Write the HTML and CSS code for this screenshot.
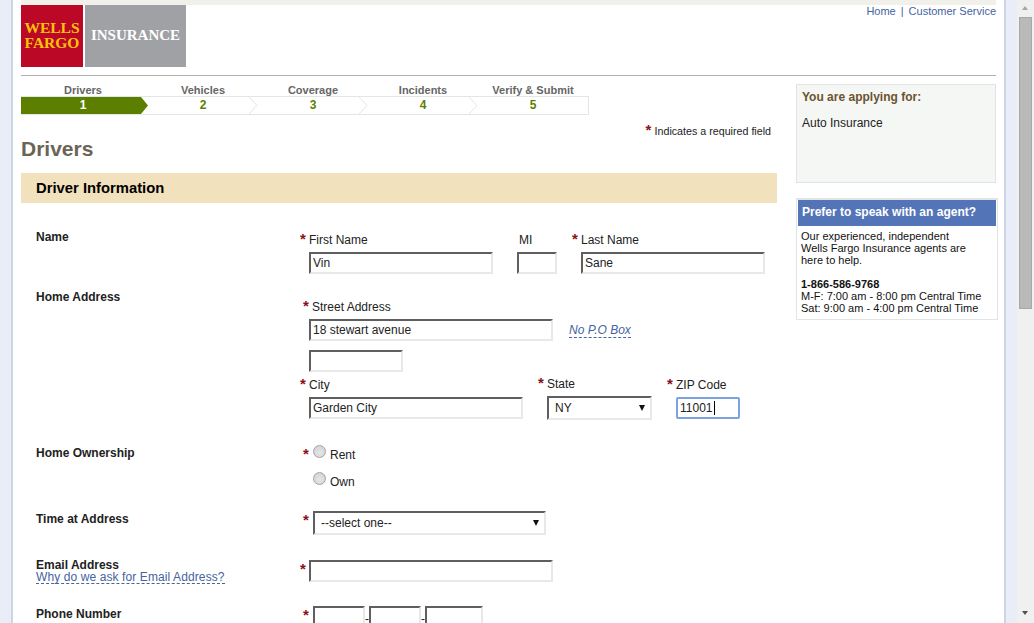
FILE: index.html
```html
<!DOCTYPE html>
<html lang="en">
<head>
  <meta charset="UTF-8">
  <title>Wells Fargo Insurance - Drivers</title>
  <link rel="stylesheet" href="styles.css">
</head>
<body>
  <div class="sheet">
    <div class="top-strip"></div>
    <header class="header">
      <div class="logo">
        <div class="logo-red">WELLS<br>FARGO</div>
        <div class="logo-grey">INSURANCE</div>
      </div>
      <nav class="top-nav"><a href="#">Home</a><span class="pipe">|</span><a href="#">Customer Service</a></nav>
    </header>

    <div class="columns">
      <main class="main">
        <div class="step-labels">
          <span>Drivers</span><span>Vehicles</span><span>Coverage</span><span>Incidents</span><span>Verify &amp; Submit</span>
        </div>
        <div class="step-bar">
          <div class="step step-active">1</div>
          <div class="step">2
            <svg class="chevron" width="10" height="17" viewBox="0 0 10 17"><polyline points="1,0 9,8.5 1,17" fill="none" stroke="#e1e6e6" stroke-width="1"/></svg>
          </div>
          <div class="step">3
            <svg class="chevron" width="10" height="17" viewBox="0 0 10 17"><polyline points="1,0 9,8.5 1,17" fill="none" stroke="#e1e6e6" stroke-width="1"/></svg>
          </div>
          <div class="step">4
            <svg class="chevron" width="10" height="17" viewBox="0 0 10 17"><polyline points="1,0 9,8.5 1,17" fill="none" stroke="#e1e6e6" stroke-width="1"/></svg>
          </div>
          <div class="step">5</div>
        </div>

        <p class="req-note"><span class="req">*</span>Indicates a required field</p>
        <h1 class="page-title">Drivers</h1>
        <h2 class="band">Driver Information</h2>

        <form class="form">
          <div class="row row-name">
            <div class="row-label">Name</div>
            <div class="fields">
              <div class="field field-first">
                <label class="cap"><span class="req">*</span>First Name</label>
                <input class="txt w184" type="text" value="Vin">
              </div>
              <div class="field field-mi">
                <label class="cap">MI</label>
                <input class="txt w40" type="text">
              </div>
              <div class="field field-last">
                <label class="cap"><span class="req">*</span>Last Name</label>
                <input class="txt w184" type="text" value="Sane">
              </div>
            </div>
          </div>

          <div class="row row-address">
            <div class="row-label">Home Address</div>
            <div class="fields-stack">
              <label class="cap cap-street"><span class="req">*</span>Street Address</label>
              <div class="street-line">
                <input class="txt w244" type="text" value="18 stewart avenue">
                <a class="hint hint-po" href="#">No P.O Box</a>
              </div>
              <input class="txt w94 street-two" type="text">
              <div class="city-line">
                <div class="field field-city">
                  <label class="cap"><span class="req">*</span>City</label>
                  <input class="txt w214" type="text" value="Garden City">
                </div>
                <div class="field field-state">
                  <label class="cap cap-state"><span class="req">*</span>State</label>
                  <div class="select-wrap w105">
                    <select class="sel sel-state"><option>NY</option></select>
                  </div>
                </div>
                <div class="field field-zip">
                  <label class="cap"><span class="req">*</span>ZIP Code</label>
                  <div class="zip-wrap">
                    <input class="txt txt-focus w64" type="text" value="11001">
                  </div>
                </div>
              </div>
            </div>
          </div>

          <div class="row row-own">
            <div class="row-label">Home Ownership</div>
            <div class="radios">
              <span class="req req-side">*</span>
              <div class="radio-list">
                <label class="radio-line"><input class="radio" type="radio" name="own">Rent</label>
                <label class="radio-line"><input class="radio" type="radio" name="own">Own</label>
              </div>
            </div>
          </div>

          <div class="row row-time">
            <div class="row-label">Time at Address</div>
            <div class="inline-field">
              <span class="req req-side">*</span>
              <div class="select-wrap w233">
                <select class="sel"><option>--select one--</option></select>
              </div>
            </div>
          </div>

          <div class="row row-email">
            <div class="row-label">Email Address
              <a class="hint hint-email" href="#">Why do we ask for Email Address?</a>
            </div>
            <div class="inline-field inline-email">
              <span class="req req-side">*</span>
              <input class="txt w244" type="text">
            </div>
          </div>

          <div class="row row-phone">
            <div class="row-label">Phone Number</div>
            <div class="inline-field">
              <span class="req req-side">*</span>
              <input class="txt w52" type="text"><span class="dash">-</span><input class="txt w52" type="text"><span class="dash">-</span><input class="txt w58" type="text">
            </div>
          </div>
        </form>
      </main>

      <aside class="side">
        <div class="applying">
          <div class="applying-title">You are applying for:</div>
          <div class="applying-item">Auto Insurance</div>
        </div>
        <div class="agent">
          <div class="agent-head">Prefer to speak with an agent?</div>
          <div class="agent-body">
            Our experienced, independent<br>
            Wells Fargo Insurance agents are<br>
            here to help.<br>
            <br>
            <strong>1-866-586-9768</strong><br>
            M-F: 7:00 am - 8:00 pm Central Time<br>
            Sat: 9:00 am - 4:00 pm Central Time
          </div>
        </div>
      </aside>
    </div>
  </div>

  <div class="scrollbar">
    <div class="arrow-up"></div>
    <div class="thumb"></div>
    <div class="arrow-down"></div>
  </div>
</body>
</html>
```

FILE: styles.css
```css
html, body {
  margin: 0;
  height: 623px;
  overflow: hidden;
}
body {
  display: flex;
  background: #e8edf7;
  font-family: "Liberation Sans", Arial, sans-serif;
  font-size: 12px;
  color: #222;
}
a {
  color: #44639f;
  text-decoration: none;
}

/* page sheet */
.sheet {
  box-sizing: border-box;
  width: 995px;
  height: 623px;
  margin-left: 11px;
  margin-right: 11px;
  padding: 0 8px;
  background: #fff;
  border-left: 2px solid #cdd5e4;
  border-right: 2px solid #cdd5e4;
  overflow: hidden;
}
.top-strip {
  height: 5px;
  background: #f1f0ea;
}
.header {
  display: flex;
  justify-content: space-between;
  height: 70px;
  border-bottom: 1px solid #b0b0b0;
}
.logo {
  display: flex;
  gap: 2px;
  height: 62px;
}
.logo-red {
  box-sizing: border-box;
  width: 62px;
  padding-top: 15px;
  background: #bb0826;
  color: #fcc20a;
  font-family: "Liberation Serif", serif;
  font-weight: bold;
  font-size: 15.5px;
  line-height: 15px;
  text-align: center;
}
.logo-grey {
  box-sizing: border-box;
  width: 101px;
  padding-top: 23px;
  background: #a0a1a4;
  color: #fff;
  font-family: "Liberation Serif", serif;
  font-weight: bold;
  font-size: 15px;
  line-height: 15px;
  text-align: center;
}
.top-nav {
  font-size: 11px;
  line-height: 13px;
}
.pipe {
  margin: 0 5px;
  color: #44639f;
}

.columns {
  display: flex;
  gap: 19px;
}
.main {
  width: 756px;
  flex: none;
}

/* steps */
.step-labels, .step-bar {
  display: grid;
  grid-template-columns: 127px 110px 110px 110px 110px;
  width: 568px;
  box-sizing: border-box;
}
.step-labels {
  height: 13px;
  margin-top: 7px;
  font-size: 11px;
  font-weight: bold;
  line-height: 14px;
  color: #666;
  text-align: center;
}
.step-labels span:first-child {
  padding-right: 3px;
}
.step-bar {
  height: 19px;
  border: 1px solid #e1e6e6;
  border-left: 0;
  font-size: 12px;
  font-weight: bold;
  line-height: 17px;
  color: #5c7f00;
  text-align: center;
}
.step {
  position: relative;
}
.step-active {
  background: #5c7f00;
  color: #fff;
  padding-right: 3px;
  clip-path: polygon(0 0, 120px 0, 127px 50%, 120px 100%, 0 100%);
}
.chevron {
  position: absolute;
  right: 0;
  top: 0;
}

.req {
  color: #8b1020;
  font-weight: bold;
  font-size: 15px;
  line-height: 10px;
  display: inline-block;
  width: 9px;
  text-align: left;
}
.req-note {
  margin: 9px 6px 0 0;
  font-size: 10.7px;
  line-height: 14px;
  color: #222;
  text-align: right;
}
.page-title {
  margin: -2px 0 0;
  font-size: 21px;
  line-height: 26px;
  color: #6b6455;
}
.band {
  margin: 11px 0 0;
  height: 30px;
  padding-left: 15px;
  background: #f2e1bd;
  color: #000;
  font-size: 14.8px;
  line-height: 30px;
}

/* form rows */
.form {
  padding-left: 15px;
}
.row {
  display: grid;
  grid-template-columns: 273px 1fr;
}
.row-label {
  font-weight: bold;
  line-height: 14px;
  color: #222;
}
.row-name { margin-top: 27px; }
.row-address { margin-top: 16px; }
.row-own { margin-top: 26px; }
.row-time { margin-top: 22px; }
.row-email { margin-top: 23px; }
.row-phone { margin-top: 23px; }
.row-email .row-label {
  padding-top: 1px;
  line-height: 12px;
}

.fields {
  display: flex;
  padding-top: 3px;
}
.field {
  display: flex;
  flex-direction: column;
  align-items: flex-start;
}
.cap {
  height: 14px;
  line-height: 14px;
  margin-bottom: 5px;
  white-space: nowrap;
  margin-left: -9px;
}
.field-mi { margin-left: 24px; }
.field-mi .cap { margin-left: 2px; }
.field-last { margin-left: 24px; }

.txt {
  box-sizing: border-box;
  height: 22px;
  margin: 0;
  padding: 1px 2px;
  border-style: solid;
  border-width: 2px;
  border-color: #5f5f5f #e8e8e8 #e8e8e8 #5f5f5f;
  background: #fff;
  font-family: "Liberation Sans", Arial, sans-serif;
  font-size: 12px;
  color: #222;
  outline: none;
}
.w40 { width: 40px; }
.w52 { width: 52px; }
.w58 { width: 58px; }
.w64 { width: 64px; }
.w94 { width: 94px; }
.w105 { width: 105px; }
.w184 { width: 184px; }
.w214 { width: 214px; }
.w233 { width: 233px; }
.w244 { width: 244px; }

.fields-stack {
  padding-top: 10px;
}
.cap-street {
  display: block;
  margin-left: -6px;
}
.street-line {
  display: flex;
  align-items: center;
}
.hint {
  border-bottom: 1px dashed #44639f;
  line-height: 13px;
}
.hint-po {
  margin: 2px 0 0 16px;
  font-style: italic;
}
.street-two {
  display: block;
  margin-top: 9px;
}
.city-line {
  display: flex;
  margin-top: 6px;
}
.field-state { margin-left: 24px; }
.cap-state {
  margin-top: -1px;
}
.field-zip { margin-left: 24px; }

.select-wrap {
  position: relative;
  height: 24px;
}
.sel {
  box-sizing: border-box;
  width: 100%;
  height: 24px;
  margin: 0;
  padding: 0 6px;
  border-style: solid;
  border-width: 2px;
  border-color: #5f5f5f #e8e8e8 #e8e8e8 #5f5f5f;
  border-radius: 0;
  background: #fff;
  font-family: "Liberation Sans", Arial, sans-serif;
  font-size: 12px;
  color: #222;
  appearance: none;
}
.select-wrap::after {
  content: "";
  position: absolute;
  right: 7px;
  top: 9px;
  border-style: solid;
  border-width: 6px 3.5px 0;
  border-color: #111 transparent transparent;
}
.zip-wrap {
  position: relative;
}
.zip-wrap::after {
  content: "";
  position: absolute;
  left: 38px;
  top: 4px;
  width: 1px;
  height: 14px;
  background: #000;
}
.txt-focus {
  border: 2px solid #7da2e0;
  border-radius: 2px;
}

.radios, .inline-field {
  display: flex;
  margin-top: -1px;
  margin-left: -6px;
}
.req-side {
  width: 10px;
  height: 14px;
  line-height: 18px;
}
.radio-list {
  display: flex;
  flex-direction: column;
  gap: 11px;
  padding-top: 2px;
}
.radio-line {
  display: flex;
  align-items: center;
  height: 16px;
  gap: 4px;
}
.radio {
  width: 13px;
  height: 13px;
  margin: -7px 0 0;
  appearance: none;
  border: 1px solid #a3a3a3;
  border-radius: 50%;
  background: radial-gradient(circle at 50% 60%, #e6e6e6, #cfcfcf);
}
.inline-email {
  margin-left: -9px;
  margin-top: 2px;
}
.inline-email .req-side { width: 9px; }
.hint-email {
  display: block;
  width: fit-content;
  font-weight: normal;
  letter-spacing: 0.1px;
  line-height: 12px;
}
.dash {
  width: 4px;
  line-height: 26px;
}

/* sidebar */
.side {
  width: 202px;
  flex: none;
  margin-top: 8px;
}
.applying {
  box-sizing: border-box;
  width: 200px;
  height: 99px;
  padding: 5px;
  background: #f5f7f4;
  border: 1px solid #e2e4e4;
}
.applying-title {
  font-weight: bold;
  line-height: 14px;
  color: #6b5330;
}
.applying-item {
  margin-top: 12px;
  line-height: 14px;
}
.agent {
  box-sizing: border-box;
  width: 202px;
  height: 122px;
  margin-top: 15px;
  border: 1px solid #e2e4e4;
  border-width: 2px 1px 1px 1px;
}
.agent-head {
  height: 26px;
  margin: 0 1px;
  padding-left: 4px;
  background: #5474b8;
  color: #fff;
  font-weight: bold;
  line-height: 25px;
}
.agent-body {
  padding: 4px 0 0 4px;
  font-size: 11px;
  line-height: 12px;
  color: #111;
}

/* scrollbar */
.scrollbar {
  position: relative;
  width: 17px;
  height: 623px;
  flex: none;
  background: #f0f0f0;
}
.thumb {
  box-sizing: border-box;
  width: 13px;
  height: 292px;
  margin: 0 2px;
  background: #b9b9b9;
  border: 1px solid #a8a8a8;
  position: absolute;
  top: 17px;
}
.arrow-up, .arrow-down {
  position: absolute;
  left: 5px;
  width: 0;
  height: 0;
  border-style: solid;
}
.arrow-up {
  top: 6px;
  border-width: 0 3.5px 4px;
  border-color: transparent transparent #a6a6a6;
}
.arrow-down {
  top: 611px;
  border-width: 4px 3.5px 0;
  border-color: #505050 transparent transparent;
}
```
